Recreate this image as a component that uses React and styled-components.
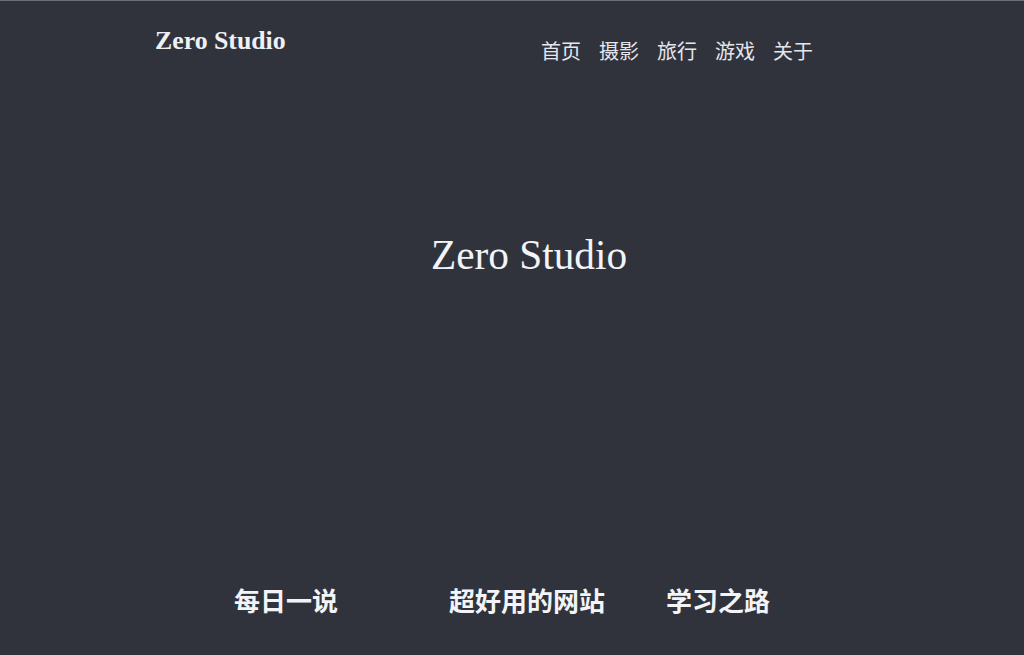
import React from "react"
import styled, { createGlobalStyle } from "styled-components"

const GlobalStyle = createGlobalStyle`
  html, body {
    margin: 0;
    padding: 0;
    background: #30333c;
  }
  body {
    font-family: "Liberation Serif", "Noto Sans CJK SC", serif;
    color: #eef0f5;
  }
`

const navItems = ["首页", "摄影", "旅行", "游戏", "关于"]
const sections = ["每日一说", "超好用的网站", "学习之路"]

const App = () => {
  return (
    <>
      <GlobalStyle />
      <Page>
        <Header>
          <Logo>Zero Studio</Logo>
          <Nav>
            {navItems.map((item) => (
              <NavLink key={item}>{item}</NavLink>
            ))}
          </Nav>
        </Header>
        <Hero>
          <HeroTitle>Zero Studio</HeroTitle>
        </Hero>
        <Sections>
          {sections.map((s) => (
            <Section key={s}>{s}</Section>
          ))}
        </Sections>
      </Page>
    </>
  )
}
export default App

const Page = styled.div`
  height: 655px;
  box-sizing: border-box;
  border-top: 1px solid #6b6e76;
  display: flex;
  flex-direction: column;
  background: #30333c;
`

const Header = styled.header`
  display: flex;
  align-items: flex-start;
  padding: 25px 0 0 155px;
  height: 70px;
  box-sizing: border-box;
`

const Logo = styled.div`
  font-family: "Liberation Serif", serif;
  font-weight: bold;
  font-size: 25.8px;
  line-height: 30px;
  color: #eef0f5;
  width: 386px;
`

const Nav = styled.nav`
  display: flex;
  gap: 18px;
  margin-top: 11px;
`

const NavLink = styled.a`
  font-family: "Noto Sans CJK SC", sans-serif;
  font-size: 20px;
  line-height: 28px;
  color: #e4e6ec;
  cursor: pointer;
`

const Hero = styled.main`
  flex: 1;
  display: flex;
  justify-content: center;
  padding: 159px 0 0 34px;
`

const HeroTitle = styled.h1`
  margin: 0;
  font-family: "Liberation Serif", serif;
  font-weight: normal;
  font-size: 41.3px;
  line-height: 50px;
  color: #f2f4f8;
`

const Sections = styled.footer`
  display: grid;
  grid-template-columns: 215px 217px 216px;
  padding: 0 0 37px 234px;
`

const Section = styled.div`
  font-family: "Noto Sans CJK SC", sans-serif;
  font-weight: bold;
  font-size: 26px;
  line-height: 36px;
  color: #f2f4f8;
`
